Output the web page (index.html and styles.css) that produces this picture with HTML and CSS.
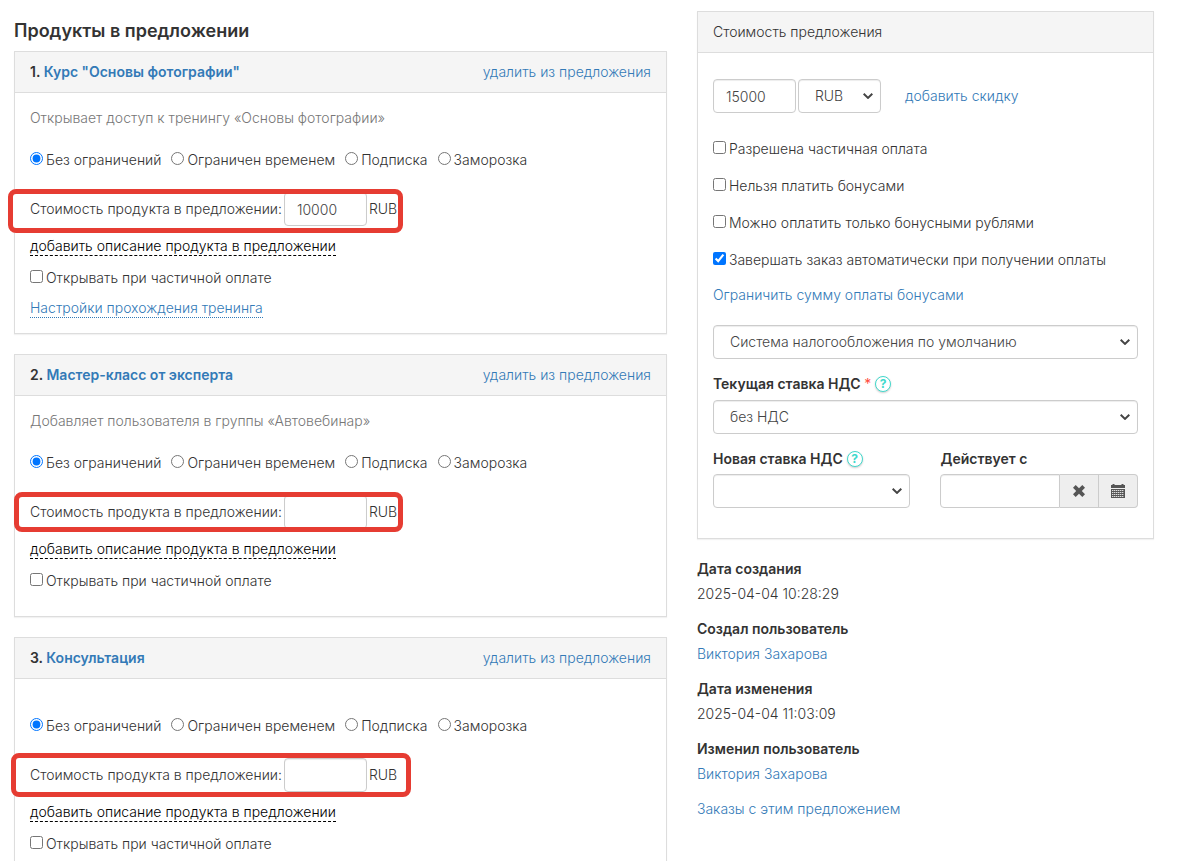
FILE: index.html
```html
<!DOCTYPE html>
<html lang="ru">
<head>
<meta charset="utf-8">
<meta name="viewport" content="width=device-width, initial-scale=1">
<title>Продукты в предложении</title>
<link rel="stylesheet" href="styles.css">
</head>
<body>
<main class="page">
  <div class="products">
    <h1 class="title">Продукты в предложении</h1>

    <section class="panel">
      <header class="panel-head">
        <h2 class="product-name">1. <a href="#">Курс "Основы фотографии"</a></h2>
        <a href="#">удалить из предложения</a>
      </header>
      <div class="panel-body">
        <p class="muted">Открывает доступ к тренингу «Основы фотографии»</p>
        <div class="options">
          <label class="choice"><input type="radio" name="limit1" checked>Без ограничений</label>
          <label class="choice"><input type="radio" name="limit1">Ограничен временем</label>
          <label class="choice"><input type="radio" name="limit1">Подписка</label>
          <label class="choice"><input type="radio" name="limit1">Заморозка</label>
        </div>
        <div class="price">
          <span class="marker marker-first"></span>
          <label class="price-label" for="price1">Стоимость продукта в предложении:</label>
          <input class="field price-field" id="price1" type="text" value="10000">
          <span>RUB</span>
        </div>
        <a class="add-text" href="#">добавить описание продукта в предложении</a>
        <label class="choice partial"><input type="checkbox">Открывать при частичной оплате</label>
        <a class="settings" href="#">Настройки прохождения тренинга</a>
      </div>
    </section>

    <section class="panel">
      <header class="panel-head">
        <h2 class="product-name">2. <a href="#">Мастер-класс от эксперта</a></h2>
        <a href="#">удалить из предложения</a>
      </header>
      <div class="panel-body">
        <p class="muted">Добавляет пользователя в группы «Автовебинар»</p>
        <div class="options">
          <label class="choice"><input type="radio" name="limit2" checked>Без ограничений</label>
          <label class="choice"><input type="radio" name="limit2">Ограничен временем</label>
          <label class="choice"><input type="radio" name="limit2">Подписка</label>
          <label class="choice"><input type="radio" name="limit2">Заморозка</label>
        </div>
        <div class="price">
          <span class="marker marker-second"></span>
          <label class="price-label" for="price2">Стоимость продукта в предложении:</label>
          <input class="field price-field" id="price2" type="text">
          <span>RUB</span>
        </div>
        <a class="add-text" href="#">добавить описание продукта в предложении</a>
        <label class="choice partial"><input type="checkbox">Открывать при частичной оплате</label>
      </div>
    </section>

    <section class="panel">
      <header class="panel-head">
        <h2 class="product-name">3. <a href="#">Консультация</a></h2>
        <a href="#">удалить из предложения</a>
      </header>
      <div class="panel-body">
        <div class="options">
          <label class="choice"><input type="radio" name="limit3" checked>Без ограничений</label>
          <label class="choice"><input type="radio" name="limit3">Ограничен временем</label>
          <label class="choice"><input type="radio" name="limit3">Подписка</label>
          <label class="choice"><input type="radio" name="limit3">Заморозка</label>
        </div>
        <div class="price">
          <span class="marker marker-third"></span>
          <label class="price-label" for="price3">Стоимость продукта в предложении:</label>
          <input class="field price-field" id="price3" type="text">
          <span>RUB</span>
        </div>
        <a class="add-text" href="#">добавить описание продукта в предложении</a>
        <label class="choice partial"><input type="checkbox">Открывать при частичной оплате</label>
      </div>
    </section>
  </div>

  <aside class="offer">
    <section class="panel">
      <header class="panel-head">Стоимость предложения</header>
      <div class="panel-body offer-body">
        <div class="total">
          <input class="field price-field" type="text" value="15000" aria-label="Стоимость">
          <select class="field select currency" aria-label="Валюта"><option>RUB</option></select>
          <a class="discount" href="#">добавить скидку</a>
        </div>
        <div class="flags">
          <label class="choice"><input type="checkbox">Разрешена частичная оплата</label>
          <label class="choice"><input type="checkbox">Нельзя платить бонусами</label>
          <label class="choice"><input type="checkbox">Можно оплатить только бонусными рублями</label>
          <label class="choice"><input type="checkbox" checked>Завершать заказ автоматически при получении оплаты</label>
        </div>
        <a class="bonus-limit" href="#">Ограничить сумму оплаты бонусами</a>
        <select class="field select" aria-label="Система налогообложения"><option>Система налогообложения по умолчанию</option></select>
        <div class="label-row">
          <label class="label" for="vat">Текущая ставка НДС <span class="required">*</span></label>
          <button class="help" type="button" aria-label="Справка">?</button>
        </div>
        <select class="field select" id="vat"><option>без НДС</option></select>
        <div class="pair">
          <div>
            <div class="label-row">
              <label class="label" for="newvat">Новая ставка НДС</label>
              <button class="help" type="button" aria-label="Справка">?</button>
            </div>
            <select class="field select" id="newvat"><option></option></select>
          </div>
          <div>
            <div class="label-row"><label class="label" for="from">Действует с</label></div>
            <div class="date">
              <input class="field date-field" id="from" type="text">
              <button class="addon" type="button" aria-label="Очистить">
                <svg width="14" height="14" viewBox="0 0 14 14"><path d="M3.700 1 7 4.200 10.300 1 13 3.700 9.800 7 13 10.300 10.300 13 7 9.800 3.700 13 1 10.300 4.200 7 1 3.700z" fill="#555"/></svg>
              </button>
              <button class="addon addon-last" type="button" aria-label="Календарь">
                <svg width="14" height="14" viewBox="0 0 14 14"><path d="M0 1h1.500V0h2v1h7V0h2v1H14v3H0zM0 5h14v9H0z" fill="#555"/><path d="M1 6.500h12M1 8.500h12M1 10.500h12M1 12.500h12" stroke="#ddd" stroke-width="1" stroke-dasharray="1.400 .6" fill="none"/></svg>
              </button>
            </div>
          </div>
        </div>
      </div>
    </section>
    <dl class="meta">
      <dt>Дата создания</dt><dd>2025-04-04 10:28:29</dd>
      <dt>Создал пользователь</dt><dd><a href="#">Виктория Захарова</a></dd>
      <dt>Дата изменения</dt><dd>2025-04-04 11:03:09</dd>
      <dt>Изменил пользователь</dt><dd><a href="#">Виктория Захарова</a></dd>
    </dl>
    <a href="#">Заказы с этим предложением</a>
  </aside>
</main>
</body>
</html>
```
FILE: styles.css
```css
* { box-sizing: border-box; }

body {
  margin: 0;
  background: #fff;
  color: #333;
  font: 300 14px/20px Inter, "Noto Sans", sans-serif;
}

a { color: #337ab7; text-decoration: none; }

input, select, button { font: inherit; }

.page {
  display: grid;
  grid-template-columns: minmax(0, 10fr) minmax(0, 7fr);
  gap: 30px;
  padding: 0 27px 0 14px;
  height: 100vh;
  overflow: hidden;
}

.title {
  margin: 19px 0 8px;
  font-size: 18px;
  line-height: 24px;
  font-weight: 600;
}

.panel {
  margin-bottom: 20px;
  border: 1px solid #ddd;
  box-shadow: 0 1px 1px rgba(0, 0, 0, .05);
}

.panel-head {
  display: flex;
  justify-content: space-between;
  padding: 10px 15px;
  border-bottom: 1px solid #ddd;
  background: #f5f5f5;
}

.product-name { margin: 0; font-size: 14px; line-height: 20px; font-weight: 600; }

.panel-body {
  display: flex;
  flex-direction: column;
  align-items: flex-start;
  padding: 15px;
}

.muted { margin: 0; color: #777; }

.options { display: flex; gap: 10px; margin-top: 22px; }

.choice { display: flex; align-items: flex-start; white-space: nowrap; }

.choice input { width: 13px; height: 13px; margin: 2px 3px 0 0; }

.field {
  height: 34px;
  padding: 6px 12px;
  border: 1px solid #ccc;
  border-radius: 4px;
  background: #fff;
  box-shadow: inset 0 1px 1px rgba(0, 0, 0, .075);
  color: #444;
}

.price {
  position: relative;
  display: flex;
  align-items: center;
  gap: 2px;
  margin: 22px 0 10px;
}

.price-field { width: 83px; }

.marker {
  position: absolute;
  border: 5px solid #e63c32;
  border-radius: 8px;
  pointer-events: none;
}

.marker-first {
  inset: -3px -6px -7px -22px;
  background: linear-gradient(#fff, #fff) left / 4px 100% no-repeat;
}

.marker-second { inset: -3px -6px -3px -16px; }
.marker-third { inset: -5px -14px -5px -19px; }

.add-text { border-bottom: 1px dashed #000; color: #000; line-height: 19px; }

.partial { margin: 12px 0 10px; }

.settings { border-bottom: 1px dotted #337ab7; line-height: 19px; }

.offer { padding-top: 11px; }

.offer-body { align-items: stretch; padding: 26px 15px 30px; }

.total { display: flex; align-items: center; gap: 2px; }

.select {
  width: 100%;
  padding: 6px 16px;
  appearance: none;
  background: #fff url("data:image/svg+xml,%3Csvg xmlns='http://www.w3.org/2000/svg' width='10' height='6'%3E%3Cpath d='M.7.8 5 4.900 9.300.8' fill='none' stroke='%23444' stroke-width='2'/%3E%3C/svg%3E") right 7px center no-repeat;
}

.total .currency { width: 83px; }

.discount { margin-left: 22px; }

.flags { display: grid; gap: 17px; margin-top: 26px; }

.bonus-limit { margin: 15px 0 20px; }

.label-row { display: flex; align-items: center; gap: 4px; margin: 15px 0 6px; }

.label { font-weight: 600; }

.required { color: #ff4d3d; font-weight: 400; }

.help {
  width: 16px;
  height: 16px;
  padding: 0;
  border: 1px solid #40d9cc;
  border-radius: 50%;
  background: #fff;
  box-shadow: 0 1px 2px rgba(0, 0, 0, .2);
  color: #40d9cc;
  font-size: 12px;
  line-height: 14px;
  font-weight: 700;
}

.pair { display: grid; grid-template-columns: minmax(0, 1fr) minmax(0, 1fr); gap: 30px; }

.pair .label-row { height: 20px; margin-bottom: 5px; }

.date { display: flex; }

.date-field { flex: 1; min-width: 0; border-radius: 4px 0 0 4px; }

.addon {
  display: flex;
  align-items: center;
  justify-content: center;
  width: 39px;
  padding: 0;
  border: 1px solid #ccc;
  border-left: 0;
  background: #eee;
}

.addon-last { border-radius: 0 4px 4px 0; }

.meta { margin: 0 0 15px; }

.meta dt { margin-bottom: 5px; font-weight: 600; }

.meta dd { margin: 0 0 15px; }
```
